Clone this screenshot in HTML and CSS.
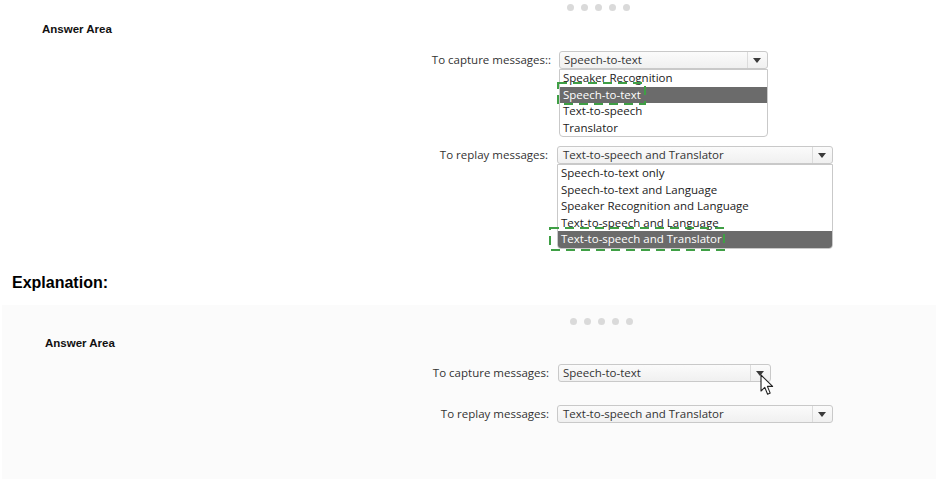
FILE: index.html
```html
<!DOCTYPE html>
<html>
<head>
<meta charset="utf-8">
<title>Answer Area</title>
<link rel="stylesheet" href="styles.css">
</head>
<body>
<section class="panel panel-top">
  <div class="dots"><span></span><span></span><span></span><span></span><span></span></div>
  <h2 class="area-title">Answer Area</h2>
  <div class="rows">
    <div class="row">
      <span class="lbl lbl-a">To capture messages::</span>
      <div class="combo combo-a">
        <div class="select"><span class="val">Speech-to-text</span><span class="arrow"></span></div>
        <ul class="list">
          <li>Speaker Recognition</li>
          <li class="sel">Speech-to-text
            <svg class="mark mark-a" width="89" height="23" viewBox="0 0 89 23"><rect x="1" y="1" width="87" height="21" fill="none" stroke="#3f9f45" stroke-width="2" stroke-dasharray="9 6"/></svg>
          </li>
          <li>Text-to-speech</li>
          <li>Translator</li>
        </ul>
      </div>
    </div>
    <div class="row row-gap">
      <span class="lbl lbl-b">To replay messages:</span>
      <div class="combo combo-b">
        <div class="select"><span class="val val-b">Text-to-speech and Translator</span><span class="arrow"></span></div>
        <ul class="list">
          <li>Speech-to-text only</li>
          <li>Speech-to-text and Language</li>
          <li>Speaker Recognition and Language</li>
          <li>Text-to-speech and Language</li>
          <li class="sel">Text-to-speech and Translator
            <svg class="mark mark-b" width="176" height="24" viewBox="0 0 176 24"><rect x="1" y="1" width="174" height="22" fill="none" stroke="#3f9f45" stroke-width="2" stroke-dasharray="9 6"/></svg>
          </li>
        </ul>
      </div>
    </div>
  </div>
</section>

<h1 class="explain">Explanation:</h1>

<section class="panel panel-bottom">
  <div class="dots"><span></span><span></span><span></span><span></span><span></span></div>
  <h2 class="area-title">Answer Area</h2>
  <div class="rows">
    <div class="row">
      <span class="lbl lbl-c">To capture messages:</span>
      <div class="combo combo-c">
        <div class="select"><span class="val">Speech-to-text</span><span class="arrow"></span>
          <svg class="cursor" width="14" height="22" viewBox="0 0 14 22"><path d="M1 1 L1 17 L4.8 13.4 L7.6 20.2 L10.2 19.1 L7.4 12.4 L12.6 12.4 Z" fill="#ffffff" stroke="#222" stroke-width="1.1" stroke-linejoin="round"/></svg>
        </div>
      </div>
    </div>
    <div class="row row-gap2">
      <span class="lbl lbl-d">To replay messages:</span>
      <div class="combo combo-b">
        <div class="select"><span class="val val-b">Text-to-speech and Translator</span><span class="arrow"></span></div>
      </div>
    </div>
  </div>
</section>
</body>
</html>
```

FILE: styles.css
```css
* { box-sizing: border-box; }
html, body { margin: 0; padding: 0; }
body {
  width: 936px;
  height: 479px;
  overflow: hidden;
  background: #ffffff;
  font-family: "Open Sans", "Noto Sans", sans-serif;
  color: #333;
}

.panel { display: flex; flex-direction: column; }
.panel-top { padding-top: 4px; }
.panel-bottom {
  margin-top: 13px;
  margin-left: 2px;
  padding-top: 13px;
  padding-left: 1px;
  background: #fbfbfb;
  height: 174px;
}

.dots { display: flex; gap: 7px; margin-left: 567px; height: 7px; }
.dots span { width: 7px; height: 7px; border-radius: 50%; background: #dadada; }

.area-title {
  margin: 11px 0 0 42px;
  font-family: "Liberation Sans", Arial, sans-serif;
  font-weight: bold;
  font-size: 11.5px;
  line-height: 14px;
  color: #111;
}

.rows { display: flex; flex-direction: column; margin-top: 15px; padding-left: 400px; }
.panel-bottom .rows { margin-top: 14px; padding-left: 397px; }
.row { display: flex; align-items: flex-start; }
.row-gap { margin-top: 9px; }
.row-gap2 { margin-top: 23px; }

.lbl {
  font-size: 11.5px;
  line-height: 18px;
  text-align: right;
  color: #333;
  white-space: nowrap;
}
.lbl-a { width: 151px; margin-right: 8px; }
.lbl-b { width: 148px; margin-right: 9px; }
.lbl-c { width: 149px; margin-right: 9px; }
.lbl-d { width: 149px; margin-right: 8px; }

.combo { display: flex; flex-direction: column; }
.combo-a { width: 209px; }
.combo-b { width: 276px; }
.combo-c { width: 213px; }

.select {
  position: relative;
  display: flex;
  height: 18px;
  border: 1px solid #c9c9c9;
  border-radius: 3px;
  background: linear-gradient(#fbfbfb, #f0f0f0);
}
.val {
  flex: 1;
  padding-left: 4px;
  font-size: 11.5px;
  line-height: 16px;
  color: #333;
  white-space: nowrap;
}
.val-b { padding-left: 5px; }
.arrow {
  position: relative;
  width: 20px;
  border-left: 1px solid #dcdcdc;
}
.arrow::after {
  content: "";
  position: absolute;
  left: 5px;
  top: 6px;
  border-left: 4.5px solid transparent;
  border-right: 4.5px solid transparent;
  border-top: 5px solid #3a3a3a;
}

.list {
  list-style: none;
  margin: 0;
  padding: 0;
  border: 1px solid #c9c9c9;
  border-radius: 0 0 4px 4px;
  background: #fff;
}
.list li {
  position: relative;
  height: 16.5px;
  padding-left: 3px;
  font-size: 11.5px;
  line-height: 16.5px;
  color: #222;
  white-space: nowrap;
}
.list li.sel { background: #6b6b6b; color: #fff; }
.list li:last-child.sel { border-radius: 0 0 3px 3px; }

.mark { position: absolute; }
.mark-a { left: -3px; top: -5px; }
.mark-b { left: -9px; top: -4px; }

.explain {
  margin: 24px 0 0 12px;
  font-family: "Liberation Sans", Arial, sans-serif;
  font-weight: bold;
  font-size: 16px;
  line-height: 19px;
  color: #000;
}

.cursor { position: absolute; left: 201px; top: 9px; }
```
